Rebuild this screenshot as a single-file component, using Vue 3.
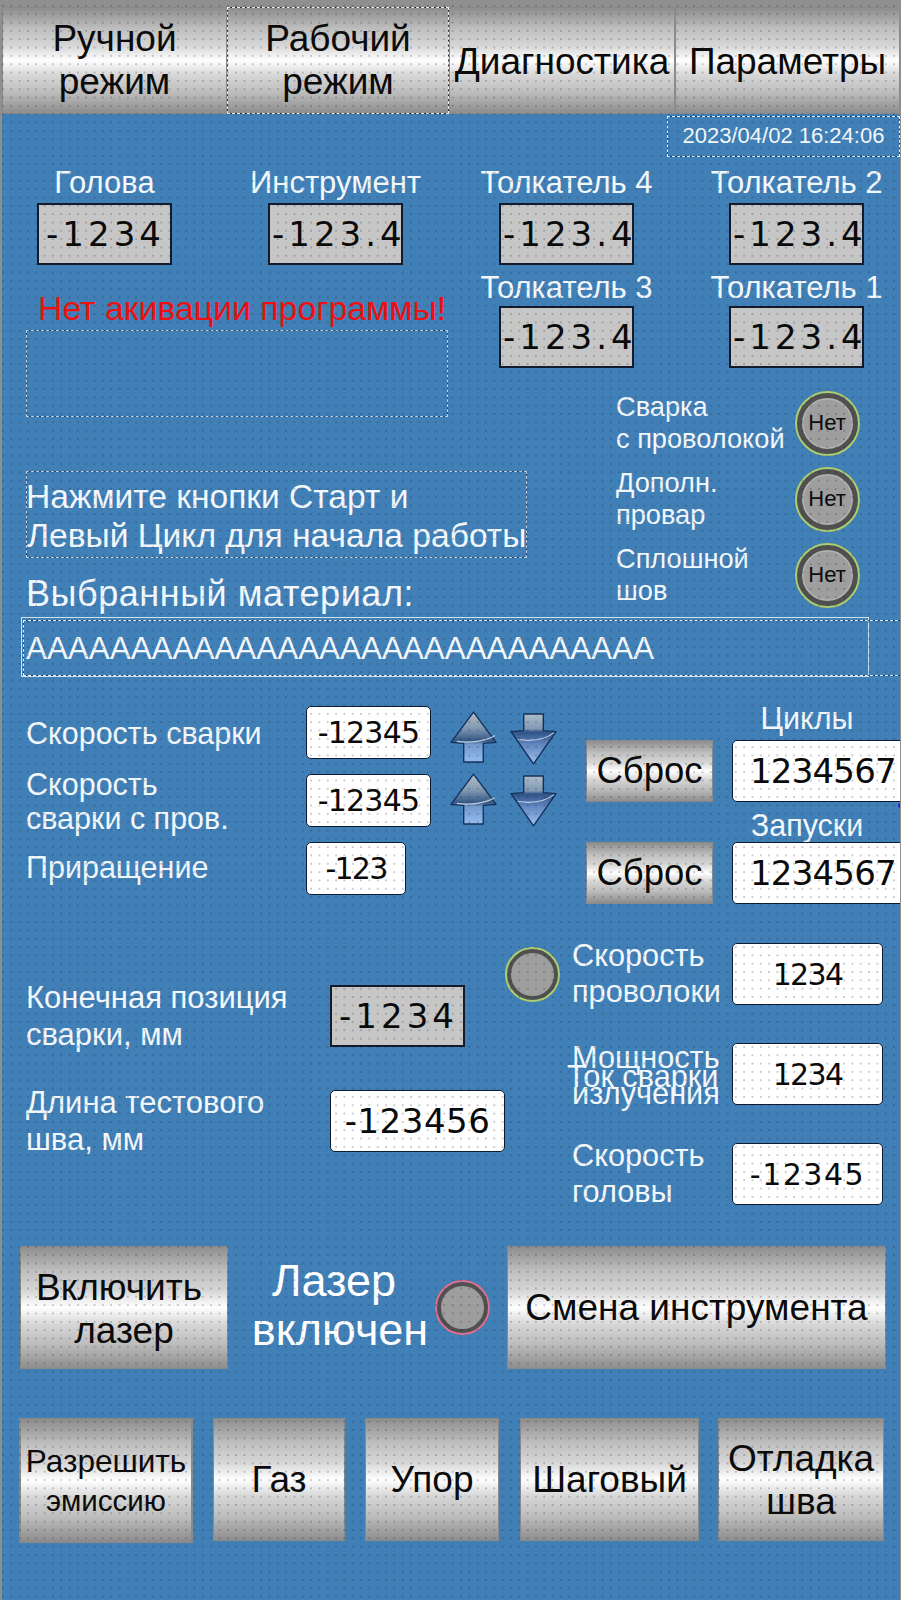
<script setup>
const indicators = [
  ['Сварка', 'с проволокой'],
  ['Дополн.', 'провар'],
  ['Сплошной', 'шов'],
]
const bottomButtons = [
  { cls: 'b-gaz', lines: ['Газ'] },
  { cls: 'b-upor', lines: ['Упор'] },
  { cls: 'b-step', lines: ['Шаговый'] },
  { cls: 'b-seam', lines: ['Отладка', 'шва'] },
]
</script>

<template>
  <div class="screen">
    <svg class="defs" width="0" height="0">
      <defs>
        <linearGradient id="upFill" x1="0" y1="0" x2="0" y2="1">
          <stop offset="0" stop-color="#b3bec8" />
          <stop offset="0.32" stop-color="#8299b2" />
          <stop offset="0.58" stop-color="#325684" />
          <stop offset="0.64" stop-color="#7298cc" />
          <stop offset="1" stop-color="#93bdf0" />
        </linearGradient>
        <linearGradient id="downFill" x1="0" y1="0" x2="0" y2="1">
          <stop offset="0" stop-color="#adbcc9" />
          <stop offset="0.3" stop-color="#8098b2" />
          <stop offset="0.36" stop-color="#2f5288" />
          <stop offset="0.62" stop-color="#6488c0" />
          <stop offset="1" stop-color="#9cc2f0" />
        </linearGradient>
      </defs>
    </svg>

    <nav class="tabs">
      <div class="metal tab tab-two">Ручной<br />режим</div>
      <div class="metal tab tab-two tab-active">Рабочий<br />режим</div>
      <div class="metal tab">Диагностика</div>
      <div class="metal tab">Параметры</div>
    </nav>

    <div class="date-row"><div class="date">2023/04/02 16:24:06</div></div>

    <section class="upper">
      <div class="upper-left">
        <div class="pair">
          <div class="readout"><span class="r-label">Голова</span><div class="gray-val">-1234</div></div>
          <div class="readout"><span class="r-label">Инструмент</span><div class="gray-val">-123.4</div></div>
        </div>
        <div class="alarm">Нет акивации программы!</div>
        <div class="alarm-box"></div>
        <div class="hint">Нажмите кнопки Старт и<br />Левый Цикл для начала работы</div>
        <div class="mat-label">Выбранный материал:</div>
      </div>
      <div class="upper-right">
        <div class="quad">
          <div class="readout"><span class="r-label">Толкатель 4</span><div class="gray-val">-123.4</div></div>
          <div class="readout"><span class="r-label">Толкатель 2</span><div class="gray-val">-123.4</div></div>
          <div class="readout"><span class="r-label">Толкатель 3</span><div class="gray-val">-123.4</div></div>
          <div class="readout"><span class="r-label">Толкатель 1</span><div class="gray-val">-123.4</div></div>
        </div>
        <div class="indicators">
          <div v-for="item in indicators" :key="item[0]" class="ind-row">
            <div class="ind-text">{{ item[0] }}<br />{{ item[1] }}</div>
            <div class="lamp lamp-big">Нет</div>
          </div>
        </div>
      </div>
    </section>

    <div class="material">АААААААААААААААААААААААААААААА</div>

    <section class="speed-block">
      <div class="speeds">
        <div class="s-label">Скорость сварки</div>
        <div class="white-val v-speed">-12345</div>
        <div class="arrows arrows-first">
          <svg class="arrow" viewBox="0 0 48 54"><path class="a-shape" d="M24 1 47 32 34 33V52H14V33L1 32Z" fill="url(#upFill)" /><path class="a-gleam" d="M7 31C20 33 36 31 46 25" /></svg>
          <svg class="arrow" viewBox="0 0 48 54"><path class="a-shape" d="M14 2H34V19L47 20 24 53 1 20 14 19Z" fill="url(#downFill)" /><path class="a-gleam" d="M8 28C22 30 36 28 45 21" /></svg>
        </div>
        <div class="s-label">Скорость<br />сварки с пров.</div>
        <div class="white-val v-speed">-12345</div>
        <div class="arrows arrows-second">
          <svg class="arrow" viewBox="0 0 48 54"><path class="a-shape" d="M24 1 47 32 34 33V52H14V33L1 32Z" fill="url(#upFill)" /><path class="a-gleam" d="M7 31C20 33 36 31 46 25" /></svg>
          <svg class="arrow" viewBox="0 0 48 54"><path class="a-shape" d="M14 2H34V19L47 20 24 53 1 20 14 19Z" fill="url(#downFill)" /><path class="a-gleam" d="M8 28C22 30 36 28 45 21" /></svg>
        </div>
        <div class="s-label s-label-last">Приращение</div>
        <div class="white-val v-step">-123</div>
      </div>
      <div class="counters">
        <span></span><span class="c-label c-label-top">Циклы</span>
        <div class="metal c-btn">Сброс</div>
        <div class="white-val v-count">1234567</div>
        <span></span><span class="c-label c-label-mid">Запуски</span>
        <div class="metal c-btn">Сброс</div>
        <div class="white-val v-count">1234567</div>
      </div>
    </section>

    <section class="params">
      <div class="finals">
        <div class="f-label">Конечная позиция<br />сварки, мм</div>
        <div class="gray-val">-1234</div>
        <div class="f-label">Длина тестового<br />шва, мм</div>
        <div class="white-val v-len">-123456</div>
      </div>
      <div class="rates">
        <div class="lamp lamp-small lamp-green"></div>
        <div class="rate-label">Скорость<br />проволоки</div>
        <div class="white-val v-rate">1234</div>
        <span></span>
        <div class="rate-label rate-overlap">Мощность<br />излучения<span class="overlay-label">Ток сварки</span></div>
        <div class="white-val v-rate">1234</div>
        <span></span>
        <div class="rate-label">Скорость<br />головы</div>
        <div class="white-val v-rate v-rate-wide">-12345</div>
      </div>
    </section>

    <section class="laser-row">
      <div class="metal laser-btn"><span class="laser-btn-top">Включить</span><span>лазер</span></div>
      <div class="laser-status"><span class="laser-status-top">Лазер</span><span>включен</span></div>
      <div class="lamp lamp-small lamp-pink"></div>
      <div class="metal tool-btn">Смена инструмента</div>
    </section>

    <section class="bottom-row">
      <div class="metal b-allow">
        <span class="allow-top">Разрешить</span>
        <span class="allow-bottom">эмиссию</span>
      </div>
      <div v-for="b in bottomButtons" :key="b.cls" class="metal b-btn" :class="b.cls">
        <template v-for="(line, i) in b.lines" :key="line"><br v-if="i" />{{ line }}</template>
      </div>
    </section>

    <i class="stray-dot"></i>
    <div class="dots"></div>
  </div>
</template>

<style scoped>
.screen {
  position: relative;
  box-sizing: border-box;
  width: 901px;
  height: 1600px;
  overflow: hidden;
  padding-top: 7px;
  background: #4180b7;
  border-left: 2px solid #8f8f8f;
  border-right: 1px solid #8f8f8f;
  font-family: "Liberation Sans", Arial, sans-serif;
  color: #f2f7fb;
  box-shadow: inset 0 7px 0 #8f8f8f;
}
.defs { position: absolute; }
.dots {
  position: absolute;
  inset: 0;
  pointer-events: none;
  background-image: radial-gradient(circle at 1px 1px, rgba(25, 25, 40, 0.24) 0.7px, transparent 1.1px);
  background-size: 8.33px 8.33px;
  background-position: 0 5px;
}
.metal {
  box-sizing: border-box;
  display: flex;
  flex-direction: column;
  align-items: center;
  justify-content: center;
  text-align: center;
  color: #0b0b0b;
  border: 1px solid #8a8a8a;
  background: linear-gradient(180deg, #8f8d8d 0%, #bfbfbf 20%, #d6d6d6 36%, #ffffff 50%, #d6d6d6 64%, #bdbdbd 80%, #8f8d8d 100%);
}

/* Tabs */
.tabs { display: flex; height: 107px; }
.tab {
  flex: 0 0 225px;
  font-size: 37px;
  line-height: 43px;
  white-space: nowrap;
  padding-top: 2px;
}
.tab-two { padding-top: 0; padding-bottom: 2px; }
.tab:nth-child(2) { flex-basis: 222px; }
.tab:nth-child(3) { flex-basis: 226px; }
.tab-active {
  border: 1px solid #2a2a2a;
  outline: 1px dashed #eeeeee;
  outline-offset: -1px;
}

/* Date */
.date-row { display: flex; justify-content: flex-end; padding-top: 2px; }
.date {
  width: 233px;
  height: 41px;
  box-sizing: border-box;
  border: 1px solid #123a68;
  outline: 1px dashed #e3eef7;
  outline-offset: -1px;
  font-size: 22px;
  line-height: 38px;
  text-align: center;
}

/* Upper */
.upper { display: flex; height: 460px; }
.upper-left { flex: 0 0 476px; min-width: 0; padding-top: 7px; }
.upper-right { flex: 1; min-width: 0; padding-top: 7px; padding-left: 21px; }
.pair { display: flex; gap: 96px; padding-left: 35px; }
.readout { display: flex; flex-direction: column; align-items: center; width: 135px; }
.r-label {
  font-size: 31px;
  line-height: 37px;
  height: 39px;
  white-space: nowrap;
}
.gray-val {
  box-sizing: border-box;
  width: 135px;
  height: 62px;
  border: 2px solid #121b2b;
  background: #c6c6c6;
  color: #0a0a0a;
  font-family: "DejaVu Sans", sans-serif;
  font-size: 34px;
  line-height: 58px;
  letter-spacing: 4px;
  text-indent: 2px;
  text-align: center;
  white-space: nowrap;
}
.alarm {
  margin-top: 23px;
  padding-left: 36px;
  color: #f10f0f;
  font-size: 33.8px;
  line-height: 40px;
  white-space: nowrap;
}
.alarm-box {
  box-sizing: border-box;
  width: 422px;
  height: 87px;
  margin: 2px 0 0 24px;
  border: 1px solid #1a4272;
  outline: 1px dashed #b9d0e4;
  outline-offset: -1px;
}
.hint {
  box-sizing: border-box;
  width: 501px;
  height: 87px;
  margin: 54px 0 0 24px;
  padding-top: 5px;
  text-indent: -1px;
  border: 1px solid #1a4272;
  outline: 1px dashed #b9d0e4;
  outline-offset: -1px;
  font-size: 33.6px;
  line-height: 39px;
  white-space: nowrap;
}
.mat-label {
  margin: 16px 0 0 24px;
  font-size: 36px;
  line-height: 40px;
  letter-spacing: 0.55px;
  white-space: nowrap;
}
.quad {
  display: grid;
  grid-template-columns: 135px 135px;
  column-gap: 95px;
  row-gap: 4px;
}
.quad .readout:nth-child(n + 3) .r-label { height: 37px; line-height: 37px; }
.indicators { margin-top: 17px; padding-left: 117px; }
.ind-row { display: flex; align-items: center; height: 76px; }
.ind-text {
  width: 178.5px;
  font-size: 27.2px;
  line-height: 32px;
  white-space: nowrap;
}

/* Lamps */
.lamp {
  box-sizing: border-box;
  display: flex;
  align-items: center;
  justify-content: center;
  border-radius: 50%;
  color: #0b0b0b;
  background: #9e9e9e;
}
.lamp-big {
  width: 65px;
  height: 65px;
  font-size: 22px;
  border: 7px solid #505050;
  box-shadow: inset 0 0 0 1.5px #b4b4b4;
  outline: 2px solid #a9cf78;
  outline-offset: -2px;
}
.lamp-small {
  width: 55px;
  height: 55px;
  flex: none;
  border: 6px solid #505050;
  outline-offset: -2px;
}
.lamp-green { outline: 2px solid #a9cf78; align-self: center; }
.lamp-pink { outline: 2px solid #d9729a; }

/* Material */
.material {
  position: relative;
  box-sizing: border-box;
  width: 848px;
  height: 60px;
  margin-left: 19px;
  padding-left: 4px;
  border: 1px solid #cfe0ef;
  font-size: 31.4px;
  line-height: 62px;
  white-space: nowrap;
}
.material::before {
  content: "";
  position: absolute;
  left: 1px;
  right: -40px;
  top: 2px;
  bottom: 0;
  border: 1px solid #123a68;
  outline: 1px dashed #e3eef7;
  outline-offset: -1px;
}

/* White values */
.white-val {
  box-sizing: border-box;
  border: 1px solid #0d1a30;
  border-radius: 5px;
  background: #ffffff;
  color: #0a0a0a;
  font-family: "DejaVu Sans", sans-serif;
  font-size: 30px;
  text-align: center;
  display: flex;
  align-items: center;
  justify-content: center;
  white-space: nowrap;
}

/* Speeds */
.speed-block { display: flex; padding-top: 29px; height: 227px; box-sizing: border-box; }
.speeds {
  display: grid;
  grid-template-columns: 280px 125px auto;
  grid-auto-rows: 53px;
  row-gap: 15px;
  padding-left: 24px;
  flex: 0 0 564px;
  box-sizing: border-box;
  align-items: center;
}
.s-label { font-size: 30.5px; line-height: 34px; white-space: nowrap; }
.s-label-last { margin-bottom: 4px; }
.v-speed { height: 53px; letter-spacing: -0.8px; }
.v-step { width: 100px; height: 53px; letter-spacing: -1.8px; }
.arrows { display: flex; gap: 13px; padding-left: 19px; }
.arrows-first { margin-top: 10px; }
.arrows-second { margin-bottom: 1px; }
.arrow { width: 47px; height: 53px; overflow: visible; }
.arrow + .arrow { margin-top: 1px; }
.a-shape { stroke: #14305a; stroke-width: 1.4; stroke-linejoin: round; }
.a-gleam { fill: none; stroke: #dfe8f2; stroke-width: 1.2; opacity: 0.8; }

/* Counters */
.counters {
  display: grid;
  grid-template-columns: 127px 185px;
  grid-template-rows: 34px 62px 40px 62px;
  column-gap: 19px;
  margin-left: 20px;
}
.c-label {
  width: 150px;
  text-align: center;
  font-size: 30.5px;
  line-height: 34px;
  white-space: nowrap;
}
.c-label-top { margin-top: -5px; }
.c-label-mid { margin-top: 6px; }
.c-btn { font-size: 36.5px; }
.v-count { font-size: 34px; letter-spacing: -0.8px; justify-content: flex-start; padding-left: 17px; }

/* Params */
.params { display: flex; padding-top: 39px; height: 301px; box-sizing: border-box; }
.finals {
  display: grid;
  grid-template-columns: 304px 175px;
  grid-template-rows: 62px 62px;
  row-gap: 43px;
  align-items: center;
  justify-items: start;
  padding: 42px 0 0 24px;
  flex: 0 0 503px;
  box-sizing: border-box;
  align-content: start;
}
.f-label { font-size: 31px; line-height: 37px; white-space: nowrap; }
.v-len { width: 175px; height: 62px; font-size: 34px; letter-spacing: 0.5px; }
.rates {
  display: grid;
  grid-template-columns: 55px 174px 151px;
  grid-template-rows: 62px 62px 62px;
  row-gap: 38px;
  align-items: center;
  margin-left: -2px;
  align-content: start;
}
.rates .lamp-small { margin-left: 2px; }
.rate-label {
  position: relative;
  padding-left: 14px;
  font-size: 30.7px;
  line-height: 36px;
  white-space: nowrap;
}
.rate-overlap { margin-top: 3px; }
.overlay-label {
  position: absolute;
  left: 9px;
  top: 19px;
  line-height: 36px;
  white-space: nowrap;
}
.v-rate { height: 62px; letter-spacing: -1.7px; }
.v-rate-wide { letter-spacing: 1.5px; }

/* Laser row */
.laser-row { display: flex; align-items: center; height: 123px; margin-top: 41px; padding-left: 18px; }
.laser-btn {
  width: 208px;
  height: 123px;
  font-size: 37px;
  line-height: 43px;
  padding-top: 2px;
}
.laser-btn-top { margin-right: 10px; }
.laser-status {
  display: flex;
  flex-direction: column;
  align-items: center;
  width: 206px;
  padding: 0 0 5px 18px;
  box-sizing: border-box;
  font-size: 45px;
  line-height: 49px;
  white-space: nowrap;
  color: #fff;
}
.laser-status-top { margin-right: 12px; }
.lamp-pink { margin-left: 1px; }
.tool-btn {
  width: 379px;
  height: 123px;
  margin-left: 17px;
  font-size: 37px;
  white-space: nowrap;
}

/* Bottom row */
.bottom-row { display: flex; align-items: flex-start; margin-top: 49px; padding-left: 17px; }
.b-allow {
  flex: 0 0 174px;
  height: 125px;
  line-height: 40px;
  white-space: nowrap;
  border: 2px solid #8a8a8a;
}
.allow-top { font-size: 31.5px; }
.allow-bottom { font-size: 29.5px; }
.b-btn { height: 123px; font-size: 37px; line-height: 43px; white-space: nowrap; }
.b-gaz { flex: 0 0 132px; margin-left: 20px; }
.b-upor { flex: 0 0 134px; margin-left: 20px; }
.b-step { flex: 0 0 179px; margin-left: 21px; }
.b-seam { flex: 0 0 166px; margin-left: 19px; }

.stray-dot {
  position: absolute;
  right: -3px;
  top: 803px;
  width: 5px;
  height: 5px;
  border-radius: 50%;
  background: #1f1fd8;
}
</style>
